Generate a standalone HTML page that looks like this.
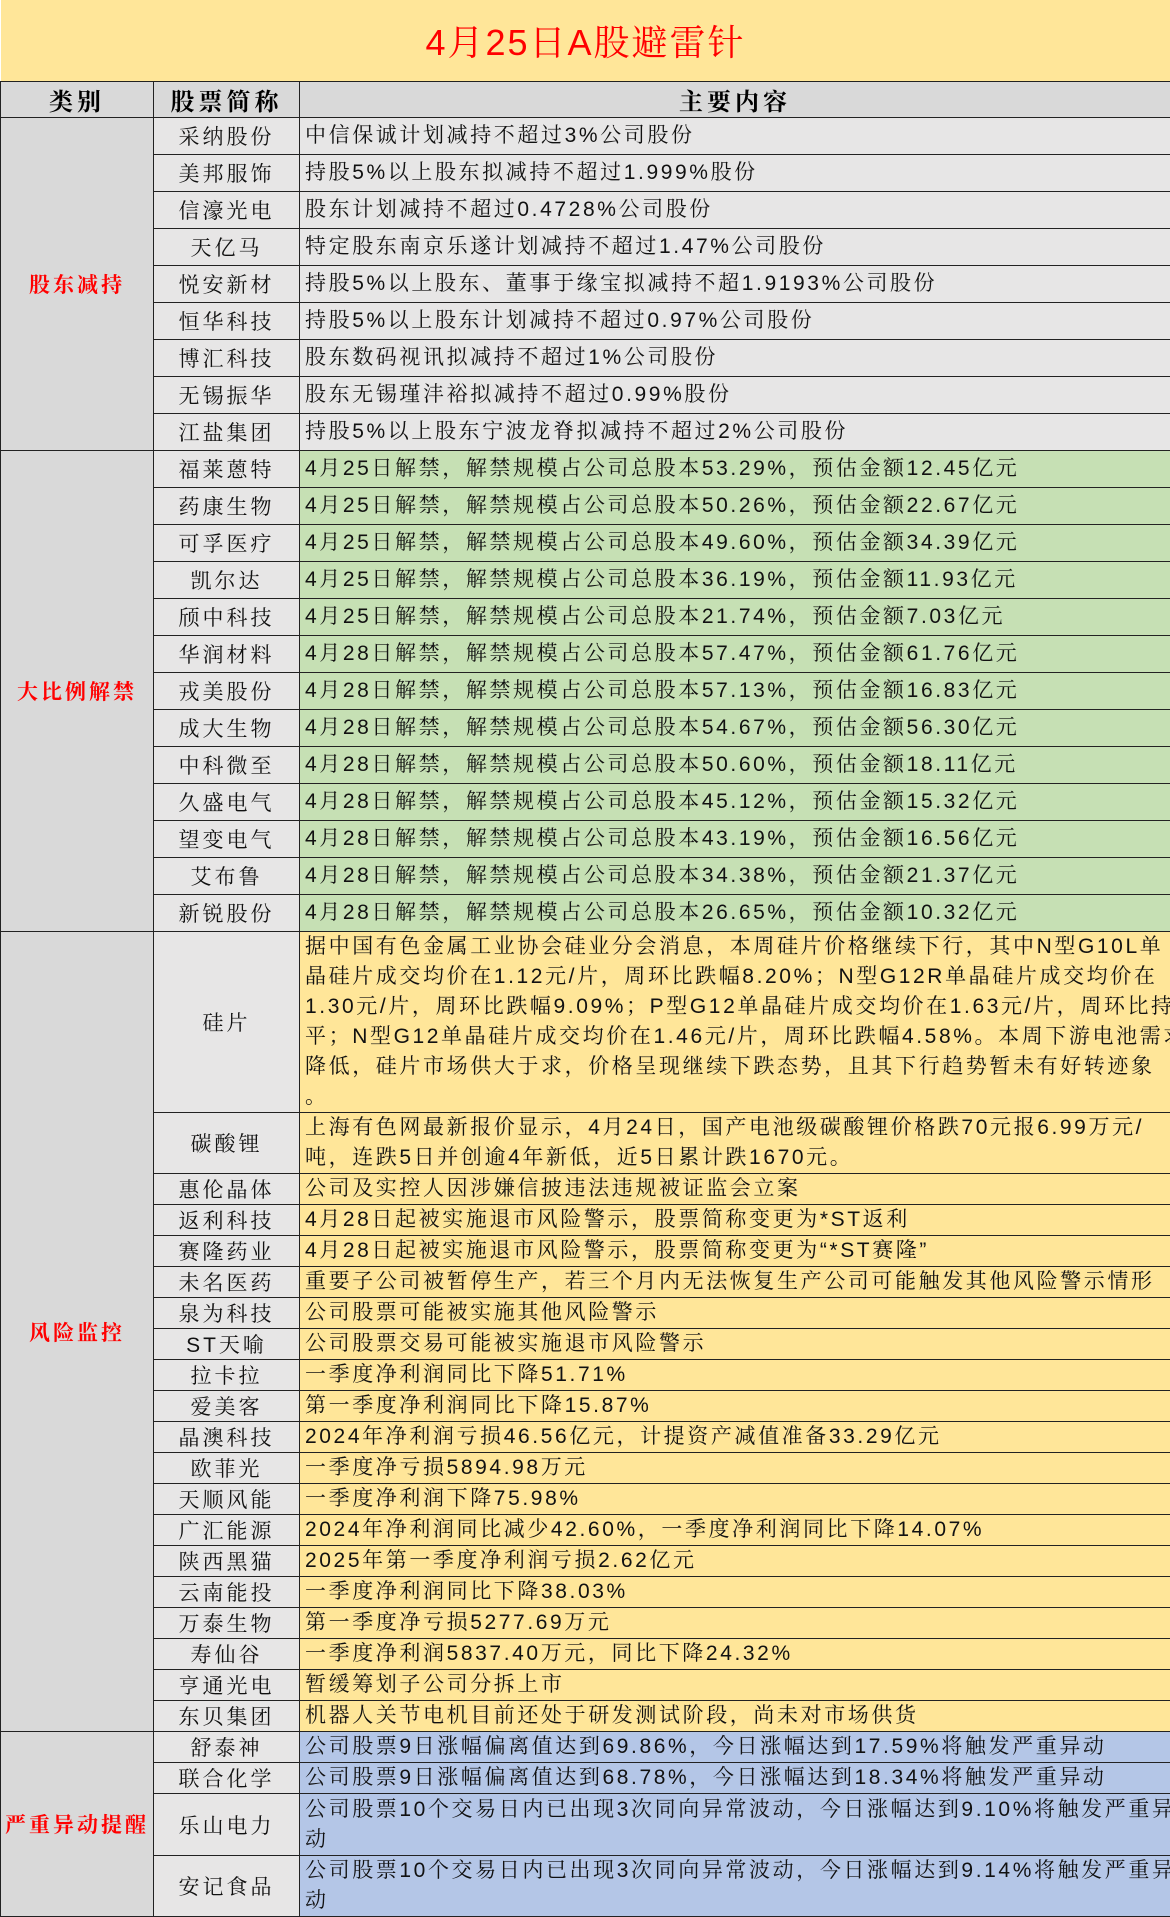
<!DOCTYPE html>
<html><head><meta charset="utf-8">
<style>
body{margin:0;background:#fff;}
table{border-collapse:collapse;table-layout:fixed;width:1170px;font-family:"Liberation Sans","Noto Serif CJK SC",serif;}
td{border:1.5px solid #222;padding:0;overflow:hidden;white-space:nowrap;}
.t{background:#FFE699;color:#f00;font-size:36px;text-align:center;height:81px;letter-spacing:2px;border:none;}
.h td{background:#D9D9D9;font-weight:bold;font-size:24px;text-align:center;letter-spacing:4px;height:35px;}
.c1{background:#D9D9D9;color:#f00;font-weight:bold;font-size:21px;text-align:center;letter-spacing:3px;}
.c2{background:#E7E6E6;font-size:21px;text-align:center;letter-spacing:3px;color:#111;}
.c3{font-size:21px;letter-spacing:2.6px;padding-left:5px;color:#111;line-height:30px;}
.g{background:#E7E6E6}.gr{background:#C6E0B4}.y{background:#FFE699}.b{background:#B4C6E7}
.r37 td{height:36px}.r30 td{height:29px}
</style></head><body>
<table>
<col style="width:153px"><col style="width:146px"><col style="width:871px">
<tr><td colspan="3" class="t">4月25日A股避雷针</td></tr>
<tr class="h"><td>类别</td><td>股票简称</td><td>主要内容</td></tr>
<tr class="r37"><td class="c1" rowspan="9">股东减持</td><td class="c2">采纳股份</td><td class="c3 g">中信保诚计划减持不超过3%公司股份</td></tr>
<tr class="r37"><td class="c2">美邦服饰</td><td class="c3 g">持股5%以上股东拟减持不超过1.999%股份</td></tr>
<tr class="r37"><td class="c2">信濠光电</td><td class="c3 g">股东计划减持不超过0.4728%公司股份</td></tr>
<tr class="r37"><td class="c2">天亿马</td><td class="c3 g">特定股东南京乐遂计划减持不超过1.47%公司股份</td></tr>
<tr class="r37"><td class="c2">悦安新材</td><td class="c3 g">持股5%以上股东、董事于缘宝拟减持不超1.9193%公司股份</td></tr>
<tr class="r37"><td class="c2">恒华科技</td><td class="c3 g">持股5%以上股东计划减持不超过0.97%公司股份</td></tr>
<tr class="r37"><td class="c2">博汇科技</td><td class="c3 g">股东数码视讯拟减持不超过1%公司股份</td></tr>
<tr class="r37"><td class="c2">无锡振华</td><td class="c3 g">股东无锡瑾沣裕拟减持不超过0.99%股份</td></tr>
<tr class="r37"><td class="c2">江盐集团</td><td class="c3 g">持股5%以上股东宁波龙脊拟减持不超过2%公司股份</td></tr>
<tr class="r37"><td class="c1" rowspan="13">大比例解禁</td><td class="c2">福莱蒽特</td><td class="c3 gr">4月25日解禁，解禁规模占公司总股本53.29%，预估金额12.45亿元</td></tr>
<tr class="r37"><td class="c2">药康生物</td><td class="c3 gr">4月25日解禁，解禁规模占公司总股本50.26%，预估金额22.67亿元</td></tr>
<tr class="r37"><td class="c2">可孚医疗</td><td class="c3 gr">4月25日解禁，解禁规模占公司总股本49.60%，预估金额34.39亿元</td></tr>
<tr class="r37"><td class="c2">凯尔达</td><td class="c3 gr">4月25日解禁，解禁规模占公司总股本36.19%，预估金额11.93亿元</td></tr>
<tr class="r37"><td class="c2">颀中科技</td><td class="c3 gr">4月25日解禁，解禁规模占公司总股本21.74%，预估金额7.03亿元</td></tr>
<tr class="r37"><td class="c2">华润材料</td><td class="c3 gr">4月28日解禁，解禁规模占公司总股本57.47%，预估金额61.76亿元</td></tr>
<tr class="r37"><td class="c2">戎美股份</td><td class="c3 gr">4月28日解禁，解禁规模占公司总股本57.13%，预估金额16.83亿元</td></tr>
<tr class="r37"><td class="c2">成大生物</td><td class="c3 gr">4月28日解禁，解禁规模占公司总股本54.67%，预估金额56.30亿元</td></tr>
<tr class="r37"><td class="c2">中科微至</td><td class="c3 gr">4月28日解禁，解禁规模占公司总股本50.60%，预估金额18.11亿元</td></tr>
<tr class="r37"><td class="c2">久盛电气</td><td class="c3 gr">4月28日解禁，解禁规模占公司总股本45.12%，预估金额15.32亿元</td></tr>
<tr class="r37"><td class="c2">望变电气</td><td class="c3 gr">4月28日解禁，解禁规模占公司总股本43.19%，预估金额16.56亿元</td></tr>
<tr class="r37"><td class="c2">艾布鲁</td><td class="c3 gr">4月28日解禁，解禁规模占公司总股本34.38%，预估金额21.37亿元</td></tr>
<tr class="r37"><td class="c2">新锐股份</td><td class="c3 gr">4月28日解禁，解禁规模占公司总股本26.65%，预估金额10.32亿元</td></tr>
<tr><td class="c1" rowspan="20">风险监控</td><td class="c2" style="height:180px">硅片</td><td class="c3 y">据中国有色金属工业协会硅业分会消息，本周硅片价格继续下行，其中N型G10L单<br>晶硅片成交均价在1.12元/片，周环比跌幅8.20%；N型G12R单晶硅片成交均价在<br>1.30元/片，周环比跌幅9.09%；P型G12单晶硅片成交均价在1.63元/片，周环比持<br>平；N型G12单晶硅片成交均价在1.46元/片，周环比跌幅4.58%。本周下游电池需求<br>降低，硅片市场供大于求，价格呈现继续下跌态势，且其下行趋势暂未有好转迹象<br>。</td></tr>
<tr><td class="c2" style="height:57px">碳酸锂</td><td class="c3 y">上海有色网最新报价显示，4月24日，国产电池级碳酸锂价格跌70元报6.99万元/<br>吨，连跌5日并创逾4年新低，近5日累计跌1670元。</td></tr>
<tr class="r30"><td class="c2">惠伦晶体</td><td class="c3 y">公司及实控人因涉嫌信披违法违规被证监会立案</td></tr>
<tr class="r30"><td class="c2">返利科技</td><td class="c3 y">4月28日起被实施退市风险警示，股票简称变更为*ST返利</td></tr>
<tr class="r30"><td class="c2">赛隆药业</td><td class="c3 y">4月28日起被实施退市风险警示，股票简称变更为“*ST赛隆”</td></tr>
<tr class="r30"><td class="c2">未名医药</td><td class="c3 y">重要子公司被暂停生产，若三个月内无法恢复生产公司可能触发其他风险警示情形</td></tr>
<tr class="r30"><td class="c2">泉为科技</td><td class="c3 y">公司股票可能被实施其他风险警示</td></tr>
<tr class="r30"><td class="c2">ST天喻</td><td class="c3 y">公司股票交易可能被实施退市风险警示</td></tr>
<tr class="r30"><td class="c2">拉卡拉</td><td class="c3 y">一季度净利润同比下降51.71%</td></tr>
<tr class="r30"><td class="c2">爱美客</td><td class="c3 y">第一季度净利润同比下降15.87%</td></tr>
<tr class="r30"><td class="c2">晶澳科技</td><td class="c3 y">2024年净利润亏损46.56亿元，计提资产减值准备33.29亿元</td></tr>
<tr class="r30"><td class="c2">欧菲光</td><td class="c3 y">一季度净亏损5894.98万元</td></tr>
<tr class="r30"><td class="c2">天顺风能</td><td class="c3 y">一季度净利润下降75.98%</td></tr>
<tr class="r30"><td class="c2">广汇能源</td><td class="c3 y">2024年净利润同比减少42.60%，一季度净利润同比下降14.07%</td></tr>
<tr class="r30"><td class="c2">陕西黑猫</td><td class="c3 y">2025年第一季度净利润亏损2.62亿元</td></tr>
<tr class="r30"><td class="c2">云南能投</td><td class="c3 y">一季度净利润同比下降38.03%</td></tr>
<tr class="r30"><td class="c2">万泰生物</td><td class="c3 y">第一季度净亏损5277.69万元</td></tr>
<tr class="r30"><td class="c2">寿仙谷</td><td class="c3 y">一季度净利润5837.40万元，同比下降24.32%</td></tr>
<tr class="r30"><td class="c2">亨通光电</td><td class="c3 y">暂缓筹划子公司分拆上市</td></tr>
<tr class="r30"><td class="c2">东贝集团</td><td class="c3 y">机器人关节电机目前还处于研发测试阶段，尚未对市场供货</td></tr>
<tr class="r30"><td class="c1" rowspan="4">严重异动提醒</td><td class="c2">舒泰神</td><td class="c3 b">公司股票9日涨幅偏离值达到69.86%，今日涨幅达到17.59%将触发严重异动</td></tr>
<tr class="r30"><td class="c2">联合化学</td><td class="c3 b">公司股票9日涨幅偏离值达到68.78%，今日涨幅达到18.34%将触发严重异动</td></tr>
<tr><td class="c2" style="height:61px">乐山电力</td><td class="c3 b">公司股票10个交易日内已出现3次同向异常波动，今日涨幅达到9.10%将触发严重异<br>动</td></tr>
<tr><td class="c2" style="height:60px">安记食品</td><td class="c3 b">公司股票10个交易日内已出现3次同向异常波动，今日涨幅达到9.14%将触发严重异<br>动</td></tr>
</table>
</body></html>
